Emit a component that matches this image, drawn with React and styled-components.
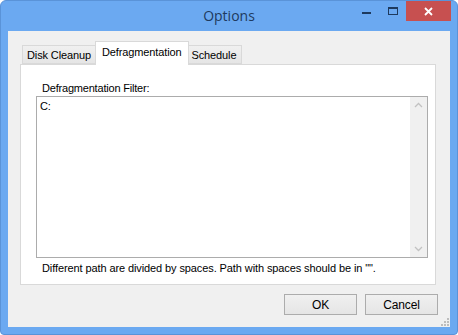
import React from "react";
import styled, { createGlobalStyle } from "styled-components";

const Global = createGlobalStyle`
  html, body { margin: 0; padding: 0; background: #ffffff; }
  body { font-family: Tahoma, "Liberation Sans", Arial, sans-serif; letter-spacing: -0.12px; }
`;

const Window = styled.div`
  box-sizing: border-box;
  width: 458px;
  height: 335px;
  background: #6ba9f1;
  border: 1px solid #5a93d8;
  border-radius: 6px 6px 4px 4px;
  padding: 0 7px 7px;
  display: flex;
  flex-direction: column;
`;

const TitleBar = styled.div`
  height: 30px;
  display: grid;
  grid-template-columns: 1fr auto 1fr;
  align-items: start;
`;

const Title = styled.div`
  grid-column: 2;
  padding-top: 5px;
  font-family: "Open Sans", "Noto Sans", sans-serif;
  font-size: 14px;
  letter-spacing: 0;
  color: #1e3a5e;
  line-height: 20px;
`;

const Controls = styled.div`
  grid-column: 3;
  justify-self: end;
  display: flex;
  align-items: flex-start;
  margin-right: -1px;
`;

const CtrlBtn = styled.div`
  width: ${(p) => p.$w}px;
  height: 20px;
  display: flex;
  align-items: center;
  justify-content: center;
  background: ${(p) => (p.$close ? "#c75050" : "transparent")};
`;

const Client = styled.div`
  flex: 1;
  background: #f0f0f0;
  display: flex;
  flex-direction: column;
  padding: 10px 14px 0 12px;
  position: relative;
`;

const TabRow = styled.div`
  display: flex;
  align-items: flex-end;
  padding-left: 2px;
  height: 23px;
  position: relative;
  z-index: 1;
`;

const Tab = styled.div`
  box-sizing: border-box;
  height: ${(p) => (p.$active ? 24 : 19)}px;
  padding: ${(p) => (p.$active ? "3px 6px 0" : "2px 5px 0 4px")};
  margin: ${(p) => (p.$active ? "0 -2px -1px" : "0")};
  border: 1px solid #d9d9d9;
  border-bottom: ${(p) => (p.$active ? "none" : "1px solid #d9d9d9")};
  background: ${(p) => (p.$active ? "#ffffff" : "linear-gradient(#f0f0f0, #e5e5e5)")};
  font-size: 11px;
  line-height: 14px;
  color: #000;
  white-space: nowrap;
  position: relative;
  z-index: ${(p) => (p.$active ? 2 : 1)};
`;

const Panel = styled.div`
  box-sizing: border-box;
  height: 221px;
  background: #ffffff;
  border: 1px solid #d9d9d9;
  padding: 17px 7px 0 15px;
  display: flex;
  flex-direction: column;
`;

const Label = styled.div`
  font-size: 11px;
  line-height: 13px;
  padding-left: 6px;
  color: #000;
  margin-bottom: 1px;
  letter-spacing: -0.2px;
`;

const TextArea = styled.div`
  box-sizing: border-box;
  height: 162px;
  border: 1px solid #acacac;
  display: flex;
  background: #fff;
`;

const TextContent = styled.div`
  flex: 1;
  font-size: 11px;
  line-height: 13px;
  padding: 3px 3px;
  color: #000;
`;

const ScrollBar = styled.div`
  width: 17px;
  background: #f0f0f0;
  display: flex;
  flex-direction: column;
  justify-content: space-between;
  align-items: center;
  padding: 5px 0;
`;

const Hint = styled.div`
  font-size: 11px;
  line-height: 13px;
  padding: 4px 0 0 6px;
  color: #000;
  white-space: nowrap;
  letter-spacing: -0.1px;
`;

const ButtonRow = styled.div`
  display: flex;
  justify-content: flex-end;
  gap: 8px;
  margin-top: 9px;
  margin-right: -2px;
`;

const Button = styled.div`
  box-sizing: border-box;
  width: 73px;
  height: 21px;
  border: 1px solid #acacac;
  background: linear-gradient(#f0f0f0, #e5e5e5);
  font-size: 12px;
  display: flex;
  align-items: center;
  justify-content: center;
  color: #000;
`;

const Grip = styled.svg`
  position: absolute;
  right: 1px;
  bottom: 1px;
`;

const Chevron = ({ up }) => (
  <svg width="9" height="6" viewBox="0 0 9 6">
    <path
      d={up ? "M1 5 L4.5 1.5 L8 5" : "M1 1 L4.5 4.5 L8 1"}
      fill="none"
      stroke="#c2c2c2"
      strokeWidth="1.3"
    />
  </svg>
);

export default function App() {
  return (
    <>
      <Global />
      <Window>
        <TitleBar>
          <Title>Options</Title>
          <Controls>
            <CtrlBtn $w={26}>
              <svg width="9" height="10" viewBox="0 0 9 10">
                <rect x="0" y="6" width="9" height="2" fill="#1e3a5e" />
              </svg>
            </CtrlBtn>
            <CtrlBtn $w={27}>
              <svg width="10" height="9" viewBox="0 0 10 9">
                <rect x="0.5" y="0.5" width="9" height="7" fill="none" stroke="#1e3a5e" />
                <rect x="0" y="0" width="10" height="2" fill="#1e3a5e" />
              </svg>
            </CtrlBtn>
            <CtrlBtn $w={45} $close>
              <svg width="9" height="9" viewBox="0 0 9 9">
                <path d="M1 1 L8 8 M8 1 L1 8" stroke="#ffffff" strokeWidth="1.8" />
              </svg>
            </CtrlBtn>
          </Controls>
        </TitleBar>
        <Client>
          <TabRow>
            <Tab>Disk Cleanup</Tab>
            <Tab $active>Defragmentation</Tab>
            <Tab>Schedule</Tab>
          </TabRow>
          <Panel>
            <Label>Defragmentation Filter:</Label>
            <TextArea>
              <TextContent>C:</TextContent>
              <ScrollBar>
                <Chevron up />
                <Chevron />
              </ScrollBar>
            </TextArea>
            <Hint>Different path are divided by spaces. Path with spaces should be in "".</Hint>
          </Panel>
          <ButtonRow>
            <Button>OK</Button>
            <Button>Cancel</Button>
          </ButtonRow>
          <Grip width="8" height="8" viewBox="0 0 8 8">
            {[[6, 0], [6, 3], [3, 3], [6, 6], [3, 6], [0, 6]].map(([x, y], i) => (
              <rect key={i} x={x} y={y} width="2" height="2" fill="#bdbdbd" />
            ))}
          </Grip>
        </Client>
      </Window>
    </>
  );
}
